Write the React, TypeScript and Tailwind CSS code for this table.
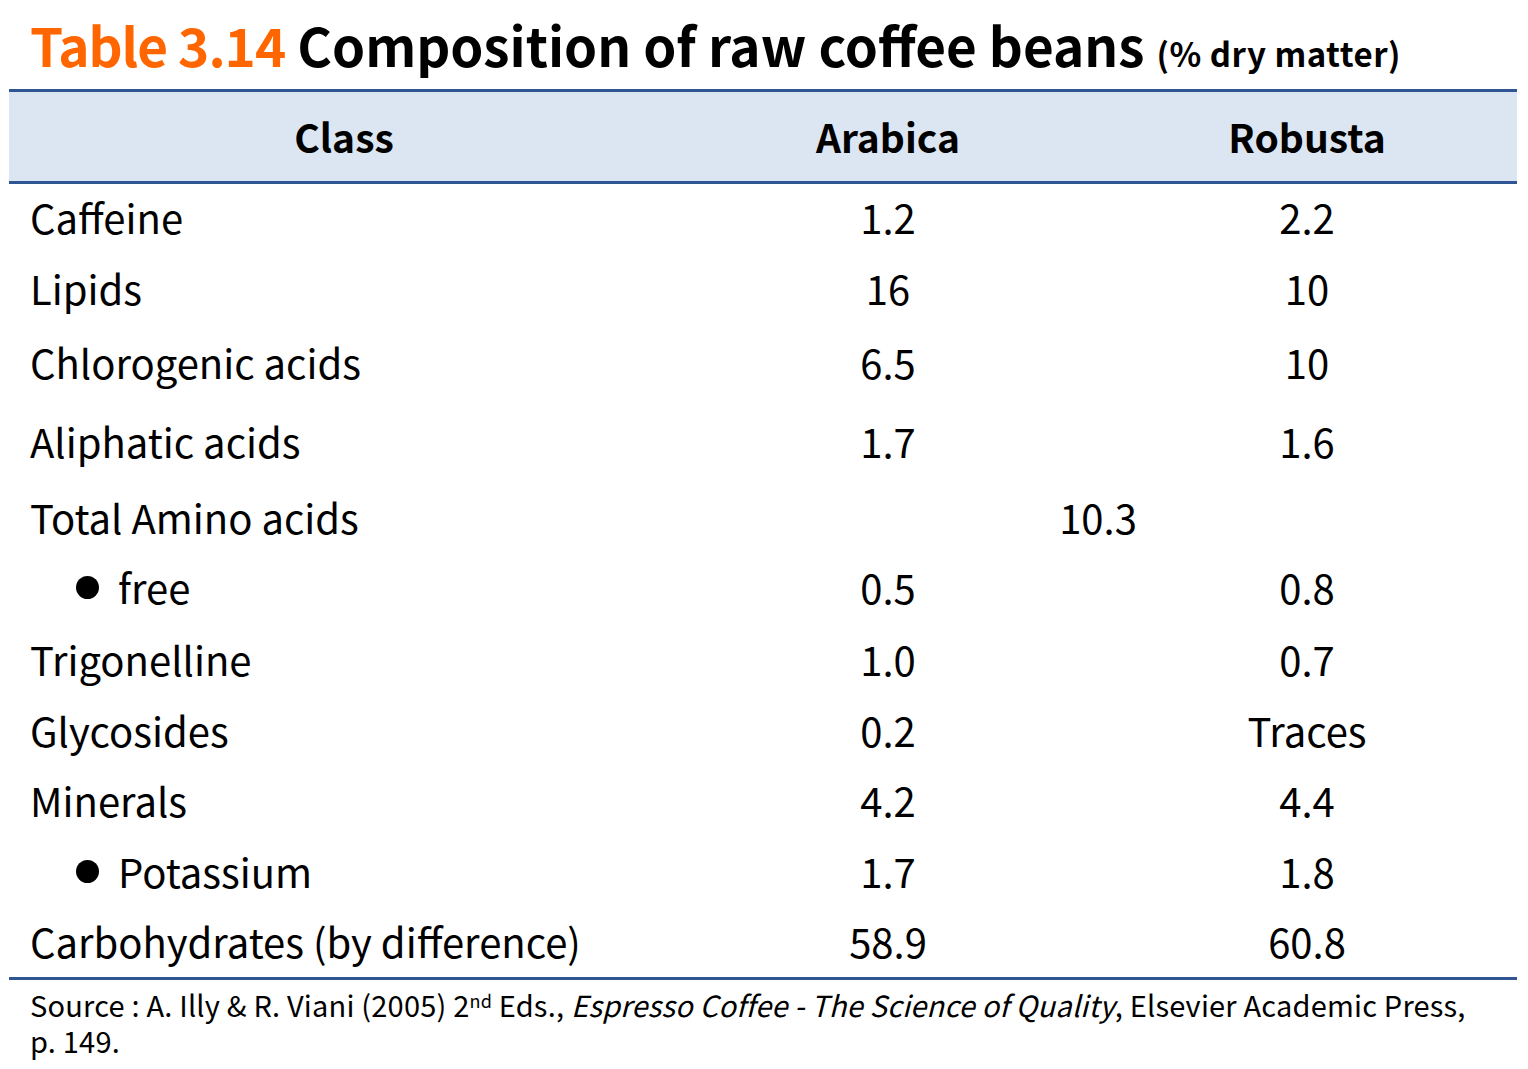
const rows: { label: string; bullet?: boolean; arabica?: string; robusta?: string; merged?: string; h: string }[] = [
  { label: 'Caffeine', arabica: '1.2', robusta: '2.2', h: 'h-[70px]' },
  { label: 'Lipids', arabica: '16', robusta: '10', h: 'h-[72px]' },
  { label: 'Chlorogenic acids', arabica: '6.5', robusta: '10', h: 'h-[76px]' },
  { label: 'Aliphatic acids', arabica: '1.7', robusta: '1.6', h: 'h-[81px]' },
  { label: 'Total Amino acids', merged: '10.3', h: 'h-[72px]' },
  { label: 'free', bullet: true, arabica: '0.5', robusta: '0.8', h: 'h-[68px]' },
  { label: 'Trigonelline', arabica: '1.0', robusta: '0.7', h: 'h-[75px]' },
  { label: 'Glycosides', arabica: '0.2', robusta: 'Traces', h: 'h-[68px]' },
  { label: 'Minerals', arabica: '4.2', robusta: '4.4', h: 'h-[72px]' },
  { label: 'Potassium', bullet: true, arabica: '1.7', robusta: '1.8', h: 'h-[70px]' },
  { label: 'Carbohydrates (by difference)', arabica: '58.9', robusta: '60.8', h: 'h-[69px]' }
]

export default function App() {
  return (
    <main className="w-[1528px] h-[1069px] bg-white text-black font-['Noto_Sans_CJK_KR',sans-serif] overflow-hidden">
      <h1 className="pl-[30px] pt-[12px] h-[89px] font-bold text-[53px] leading-[64px] whitespace-nowrap">
        <span className="text-[#ff6600] tracking-[-1px]">Table 3.14</span> Composition of raw coffee beans{' '}
        <span className="text-[33px] tracking-[0.5px]">(% dry matter)</span>
      </h1>

      <div className="mx-[9px] w-[1508px]">
        <div className="grid grid-cols-[670px_418px_420px] h-[95px] items-center bg-[#dce6f2] border-y-[3px] border-[#2f5593] font-bold text-[39px]">
          <div className="text-center">Class</div>
          <div className="text-center">Arabica</div>
          <div className="text-center">Robusta</div>
        </div>

        <div className="border-b-[3px] border-[#2f5593] text-[40px] leading-[48px]">
          {rows.map((row) => (
            <div key={row.label} className={`grid grid-cols-[670px_418px_420px] items-center pb-[4px] ${row.h}`}>
              {row.bullet ? (
                <div className="flex items-center pl-[67px] gap-[19px]">
                  <span className="w-[23px] h-[23px] rounded-full bg-black" />
                  <span>{row.label}</span>
                </div>
              ) : (
                <div className="pl-[21px]">{row.label}</div>
              )}
              {row.merged ? (
                <div className="col-span-2 text-center">{row.merged}</div>
              ) : (
                <>
                  <div className="text-center">{row.arabica}</div>
                  <div className="text-center">{row.robusta}</div>
                </>
              )}
            </div>
          ))}
        </div>

        <p className="pl-[21px] pt-[6px] text-[29px] leading-[36px] tracking-[0.2px]">
          Source : A. Illy &amp; R. Viani (2005) 2<sup className="text-[18px] leading-none">nd</sup> Eds.,{' '}
          <i>Espresso Coffee - The Science of Quality</i>, Elsevier Academic Press, p.&nbsp;149.
        </p>
      </div>
    </main>
  )
}
